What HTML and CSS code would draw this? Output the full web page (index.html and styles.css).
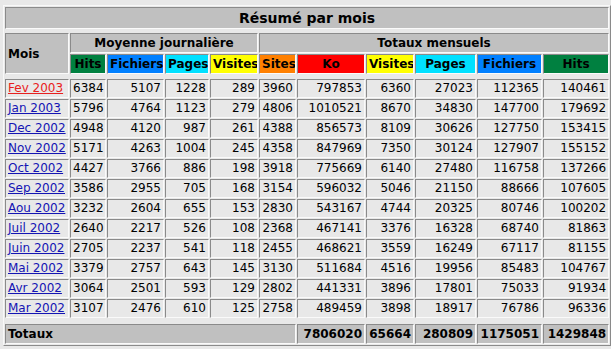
FILE: index.html
```html
<!DOCTYPE html>
<html lang="fr">
<head>
<meta charset="utf-8">
<title>Résumé par mois</title>
<link rel="stylesheet" href="styles.css">
</head>
<body>
<table class="summary">
  <colgroup>
    <col class="c-mois"><col class="c-hits1"><col class="c-fich1"><col class="c-pages1"><col class="c-vis1">
    <col class="c-sites"><col class="c-ko"><col class="c-vis2"><col class="c-pages2"><col class="c-fich2"><col class="c-hits2">
  </colgroup>
  <tr class="r-title"><th colspan="11" class="gray title">Résumé par mois</th></tr>
  <tr class="sp sp-a"><td colspan="11"></td></tr>
  <tr class="r-head">
    <th rowspan="2" class="gray left">Mois</th>
    <th colspan="4" class="gray">Moyenne journalière</th>
    <th colspan="6" class="gray">Totaux mensuels</th>
  </tr>
  <tr class="r-head">
    <th class="hits">Hits</th>
    <th class="files">Fichiers</th>
    <th class="pages">Pages</th>
    <th class="visits">Visites</th>
    <th class="sites">Sites</th>
    <th class="kb">Ko</th>
    <th class="visits">Visites</th>
    <th class="pages">Pages</th>
    <th class="files">Fichiers</th>
    <th class="hits">Hits</th>
  </tr>
  <tr class="sp sp-b"><td colspan="11"></td></tr>
  <tr><td class="m"><a class="visited" href="#">Fev 2003</a></td><td>6384</td><td>5107</td><td>1228</td><td>289</td><td>3960</td><td>797853</td><td>6360</td><td>27023</td><td>112365</td><td>140461</td></tr>
  <tr><td class="m"><a href="#">Jan 2003</a></td><td>5796</td><td>4764</td><td>1123</td><td>279</td><td>4806</td><td>1010521</td><td>8670</td><td>34830</td><td>147700</td><td>179692</td></tr>
  <tr><td class="m"><a href="#">Dec 2002</a></td><td>4948</td><td>4120</td><td>987</td><td>261</td><td>4388</td><td>856573</td><td>8109</td><td>30626</td><td>127750</td><td>153415</td></tr>
  <tr><td class="m"><a href="#">Nov 2002</a></td><td>5171</td><td>4263</td><td>1004</td><td>245</td><td>4358</td><td>847969</td><td>7350</td><td>30124</td><td>127907</td><td>155152</td></tr>
  <tr><td class="m"><a href="#">Oct 2002</a></td><td>4427</td><td>3766</td><td>886</td><td>198</td><td>3918</td><td>775669</td><td>6140</td><td>27480</td><td>116758</td><td>137266</td></tr>
  <tr><td class="m"><a href="#">Sep 2002</a></td><td>3586</td><td>2955</td><td>705</td><td>168</td><td>3154</td><td>596032</td><td>5046</td><td>21150</td><td>88666</td><td>107605</td></tr>
  <tr><td class="m"><a href="#">Aou 2002</a></td><td>3232</td><td>2604</td><td>655</td><td>153</td><td>2830</td><td>543167</td><td>4744</td><td>20325</td><td>80746</td><td>100202</td></tr>
  <tr><td class="m"><a href="#">Juil 2002</a></td><td>2640</td><td>2217</td><td>526</td><td>108</td><td>2368</td><td>467141</td><td>3376</td><td>16328</td><td>68740</td><td>81863</td></tr>
  <tr><td class="m"><a href="#">Juin 2002</a></td><td>2705</td><td>2237</td><td>541</td><td>118</td><td>2455</td><td>468621</td><td>3559</td><td>16249</td><td>67117</td><td>81155</td></tr>
  <tr><td class="m"><a href="#">Mai 2002</a></td><td>3379</td><td>2757</td><td>643</td><td>145</td><td>3130</td><td>511684</td><td>4516</td><td>19956</td><td>85483</td><td>104767</td></tr>
  <tr><td class="m"><a href="#">Avr 2002</a></td><td>3064</td><td>2501</td><td>593</td><td>129</td><td>2802</td><td>441331</td><td>3896</td><td>17801</td><td>75033</td><td>91934</td></tr>
  <tr><td class="m"><a href="#">Mar 2002</a></td><td>3107</td><td>2476</td><td>610</td><td>125</td><td>2758</td><td>489459</td><td>3898</td><td>18917</td><td>76786</td><td>96336</td></tr>
  <tr class="sp sp-c"><td colspan="11"></td></tr>
  <tr class="r-total">
    <th colspan="6" class="gray left">Totaux</th>
    <th class="gray num">7806020</th>
    <th class="gray num">65664</th>
    <th class="gray num">280809</th>
    <th class="gray num">1175051</th>
    <th class="gray num">1429848</th>
  </tr>
</table>
</body>
</html>
```

FILE: styles.css
```css
html, body {
  margin: 0;
  padding: 0;
  background: #e8e8e8;
  overflow: hidden;
}

body {
  padding: 5px 0 0 3px;
  font-family: "DejaVu Sans", Verdana, sans-serif;
  font-size: 12px;
  color: #000;
}

.summary {
  border-collapse: separate;
  border-spacing: 1px;
  border: 1px solid;
  border-color: #f8f8f8 #8a8a8a #8a8a8a #f8f8f8;
  table-layout: fixed;
  width: 608px;
}

.c-mois { width: 64px; }
.c-hits1 { width: 36px; }
.c-fich1 { width: 57px; }
.c-pages1 { width: 44px; }
.c-vis1 { width: 48px; }
.c-sites { width: 37px; }
.c-ko { width: 68px; }
.c-vis2 { width: 48px; }
.c-pages2 { width: 61px; }
.c-fich2 { width: 65px; }
.c-hits2 { width: 66px; }

.summary th,
.summary td {
  box-sizing: border-box;
  border: 1px solid;
  border-color: #8a8a8a #fafafa #fafafa #8a8a8a;
  padding: 0 2px;
  white-space: nowrap;
  overflow: hidden;
}

.summary td {
  height: 19px;
  text-align: right;
  font-weight: normal;
  line-height: 15px;
}

.summary td.m {
  text-align: left;
  padding-left: 2px;
}

.summary th {
  font-weight: bold;
  text-align: center;
  height: 20px;
  line-height: 16px;
}

.summary tr.sp td {
  border: 0;
  padding: 0;
}
.summary tr.sp-a td { height: 2px; }
.summary tr.sp-b td { height: 3px; }
.summary tr.sp-c td { height: 4px; }

.r-title th {
  height: 22px;
}
.title {
  font-size: 14px;
}

.gray { background: #c0c0c0; }
.summary th.left { text-align: left; padding-left: 2px; }
.summary th.num { text-align: right; }

.hits { background: #008040; }
.files { background: #0080ff; }
.pages { background: #00e0ff; }
.visits { background: #ffff00; }
.sites { background: #ff8000; }
.kb { background: #ff0000; }

a {
  color: #1414b4;
  text-decoration: underline;
}
a.visited {
  color: #e82020;
}
```
